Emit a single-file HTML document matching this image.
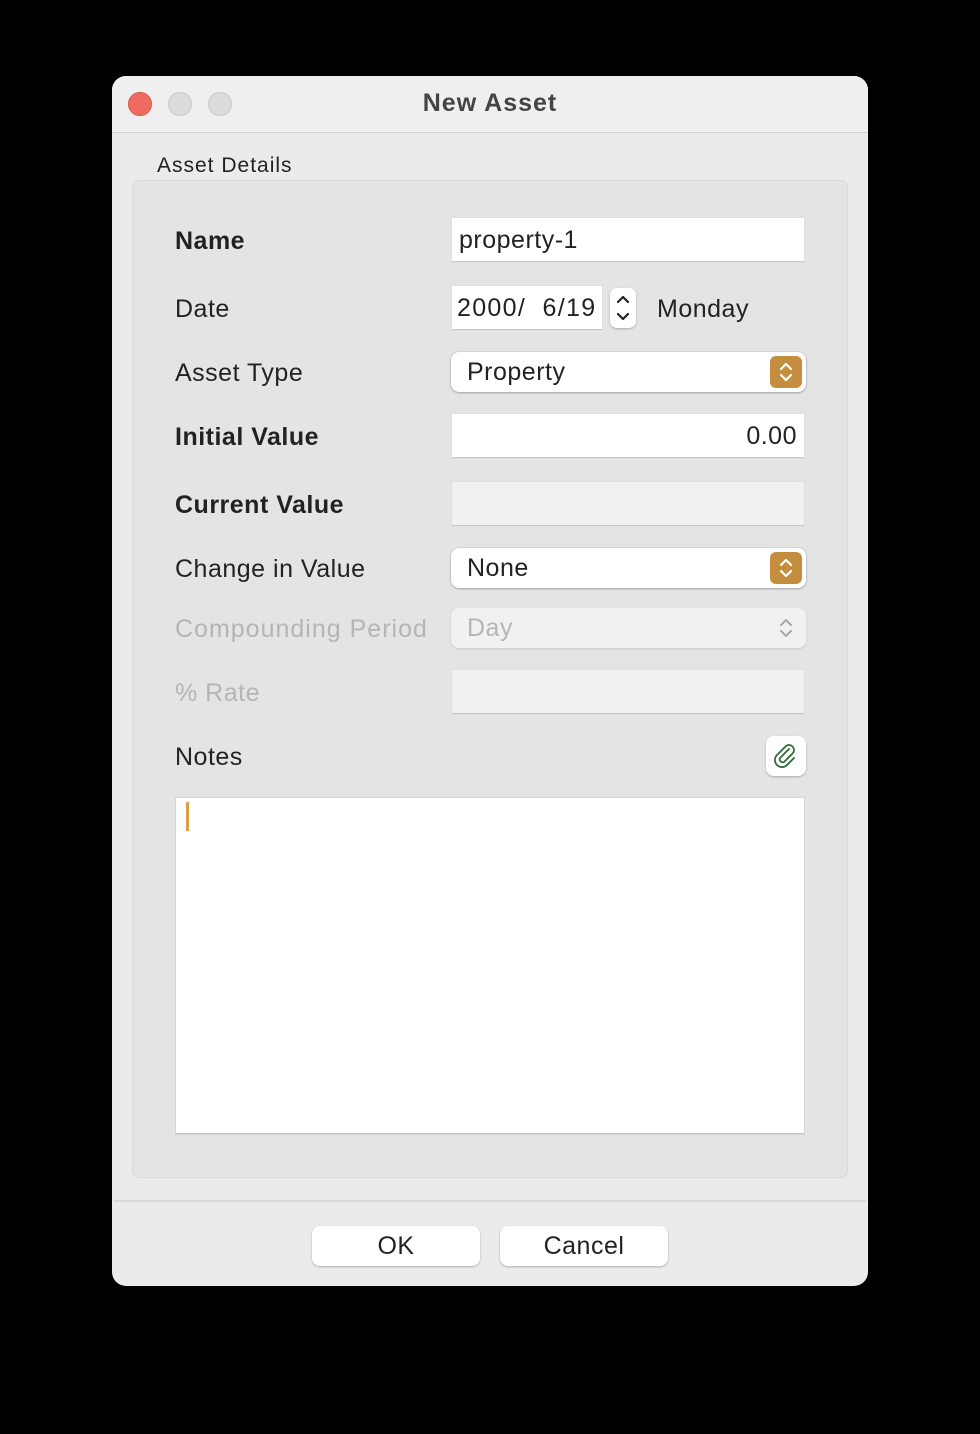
<!DOCTYPE html>
<html><head><style>
body{margin:0;width:980px;height:1434px;background:#000;position:relative;font-family:"Liberation Sans",sans-serif;overflow:hidden;letter-spacing:0.5px}
.a{position:absolute}
.win{left:112px;top:76px;width:756px;height:1210px;background:#ecebeb;border-radius:14px;overflow:hidden}
.lbl{position:absolute;left:175px;font-size:25px;color:#222;line-height:30px}
.b{font-weight:bold}
.dis{color:#b5b5b5}
.inp{position:absolute;background:#fff;border-bottom:1.5px solid #c4c4c4;box-shadow:0 0 0 1px #e0e0e0;font-size:25px;color:#222;line-height:44px;box-sizing:border-box;padding:0 7px}
.pop{position:absolute;left:451px;width:355px;height:40px;background:#fff;border-radius:8px;box-shadow:0 1px 2px rgba(0,0,0,.25),0 0 0 .5px rgba(0,0,0,.1);font-size:25px;line-height:40px;padding-left:16px;box-sizing:border-box;color:#222}
.ob{position:absolute;right:4px;top:4px;width:32px;height:32px;border-radius:6px;background:#c58e3e}
.btn{position:absolute;top:1226px;width:168px;height:40px;background:#fff;border-radius:8px;box-shadow:0 1px 2px rgba(0,0,0,.25);text-align:center;font-size:25px;line-height:40px;color:#222}
</style></head><body>
<div class="a win">
 <div class="a" style="left:0;top:0;width:756px;height:56px;background:#f0efef;border-bottom:1px solid #d2d2d2"></div>
</div>
<div class="a" style="left:128px;top:92px;width:24px;height:24px;border-radius:50%;background:#ec6a5e;box-shadow:inset 0 0 0 .5px #d0554a"></div>
<div class="a" style="left:168px;top:92px;width:24px;height:24px;border-radius:50%;background:#dcdcdc;box-shadow:inset 0 0 0 1px #c8c8c8"></div>
<div class="a" style="left:208px;top:92px;width:24px;height:24px;border-radius:50%;background:#dcdcdc;box-shadow:inset 0 0 0 1px #c8c8c8"></div>
<div class="a" style="left:112px;width:756px;top:88px;text-align:center;font-size:25px;font-weight:bold;color:#444;line-height:30px;letter-spacing:1px">New Asset</div>
<div class="a" style="left:157px;top:153px;font-size:21px;color:#222;line-height:26px;letter-spacing:1px">Asset Details</div>
<div class="a" style="left:132px;top:180px;width:714px;height:996px;background:#e4e4e4;border:1px solid #dadada;border-radius:7px"></div>

<div class="lbl b" style="top:226px">Name</div>
<div class="inp" style="left:452px;top:218px;width:352px;height:44px">property-1</div>

<div class="lbl" style="top:294px">Date</div>
<div class="inp" style="left:452px;top:286px;width:150px;height:44px;padding:0 5px;letter-spacing:1.3px">2000/&nbsp; 6/19</div>
<div class="a" style="left:610px;top:288px;width:26px;height:40px;background:#fff;border-radius:7px;box-shadow:0 1px 2px rgba(0,0,0,.25)">
<svg width="26" height="40"><path d="M8 14l5-5 5 5M8 26l5 5 5-5" stroke="#222" stroke-width="2.2" fill="none" stroke-linecap="round" stroke-linejoin="round"/></svg></div>
<div class="a" style="left:657px;top:294px;font-size:25px;color:#222;line-height:30px">Monday</div>

<div class="lbl" style="top:358px">Asset Type</div>
<div class="pop" style="top:352px">Property<div class="ob"><svg width="32" height="32"><path d="M11 13l5-5 5 5M11 19l5 5 5-5" stroke="#fff" stroke-width="2.2" fill="none" stroke-linecap="round" stroke-linejoin="round"/></svg></div></div>

<div class="lbl b" style="top:422px">Initial Value</div>
<div class="inp" style="left:452px;top:414px;width:352px;height:44px;text-align:right">0.00</div>

<div class="lbl b" style="top:490px">Current Value</div>
<div class="inp" style="left:452px;top:482px;width:352px;height:44px;background:#f1f1f1"></div>

<div class="lbl" style="top:554px">Change in Value</div>
<div class="pop" style="top:548px">None<div class="ob"><svg width="32" height="32"><path d="M11 13l5-5 5 5M11 19l5 5 5-5" stroke="#fff" stroke-width="2.2" fill="none" stroke-linecap="round" stroke-linejoin="round"/></svg></div></div>

<div class="lbl dis" style="top:614px;letter-spacing:1px">Compounding Period</div>
<div class="pop" style="top:608px;background:#f1f1f1;color:#b5b5b5;box-shadow:0 1px 2px rgba(0,0,0,.12)">Day<svg class="a" style="right:4px;top:4px" width="32" height="32"><path d="M11 13l5-5 5 5M11 19l5 5 5-5" stroke="#a8a8a8" stroke-width="2" fill="none" stroke-linecap="round" stroke-linejoin="round"/></svg></div>

<div class="lbl dis" style="top:678px">% Rate</div>
<div class="inp" style="left:452px;top:670px;width:352px;height:44px;background:#f1f1f1"></div>

<div class="lbl" style="top:742px">Notes</div>
<div class="a" style="left:766px;top:736px;width:40px;height:40px;background:#fff;border-radius:8px;box-shadow:0 1px 2px rgba(0,0,0,.25)">
<svg width="40" height="40"><path d="M23 13l-9 9a3 3 0 0 0 4 4l9-9a5 5 0 0 0-7-7l-9 9a7 7 0 0 0 10 10l7-7" stroke="#2f6b3a" stroke-width="1.8" fill="none" stroke-linecap="round"/></svg></div>

<div class="a" style="left:176px;top:798px;width:628px;height:336px;background:#fff;box-shadow:0 0 0 1px #d6d6d6;border-bottom:1px solid #c4c4c4;box-sizing:border-box"></div>
<div class="a" style="left:186px;top:802px;width:3px;height:29px;background:#d9a04a"></div>

<div class="a" style="left:114px;top:1200px;width:752px;height:2px;background:#dadada"></div>
<div class="btn" style="left:312px">OK</div>
<div class="btn" style="left:500px">Cancel</div>
</body></html>
